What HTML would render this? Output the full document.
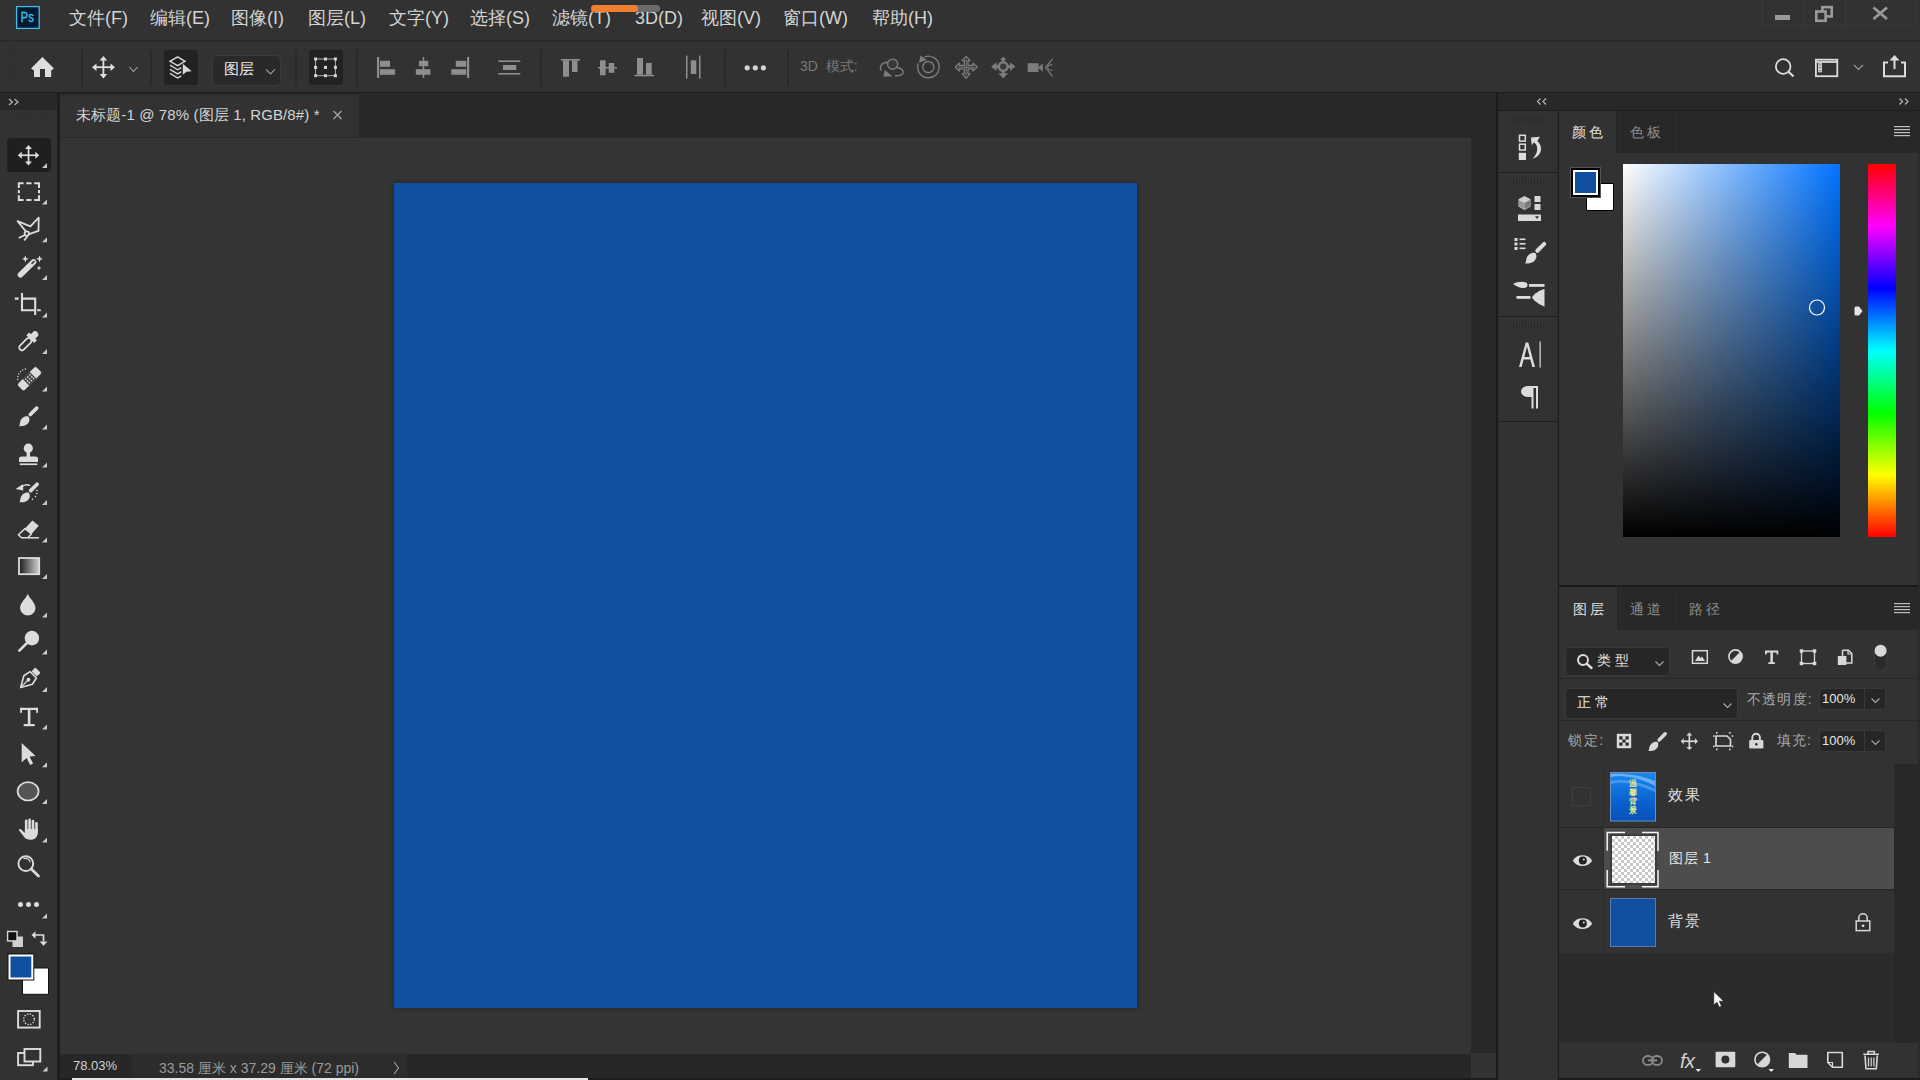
<!DOCTYPE html>
<html><head><meta charset="utf-8">
<style>
*{margin:0;padding:0;box-sizing:border-box}
html,body{width:1920px;height:1080px;overflow:hidden;background:#323232;font-family:"Liberation Sans",sans-serif;color:#d6d6d6}
.a{position:absolute}
svg{position:absolute;overflow:visible}
.menu{position:absolute;top:6px;font-size:18px;color:#d4d4d4;white-space:nowrap;line-height:24px}
</style></head><body>

<!-- MENU BAR -->
<div class="a" style="left:0;top:0;width:1920px;height:40px;background:#323232"></div>
<div class="a" style="left:0;top:40px;width:1920px;height:2px;background:#2a2a2a"></div>


<!-- PS logo -->
<svg width="40" height="40" style="left:0;top:0"><rect x="16.6" y="6.6" width="22.6" height="21.8" fill="#001b30" stroke="#45bbe8" stroke-width="1.3"/><text x="20.6" y="22.4" font-family="Liberation Sans" font-size="15.5" fill="#45bbe8" stroke="#45bbe8" stroke-width="0.35" textLength="13.4" lengthAdjust="spacingAndGlyphs">Ps</text></svg>
<div class="menu" style="left:69px">文件(F)</div>
<div class="menu" style="left:150px">编辑(E)</div>
<div class="menu" style="left:231px">图像(I)</div>
<div class="menu" style="left:308px">图层(L)</div>
<div class="menu" style="left:389px">文字(Y)</div>
<div class="menu" style="left:470px">选择(S)</div>
<div class="menu" style="left:552px">滤镜(T)</div>
<div class="menu" style="left:635px">3D(D)</div>
<div class="menu" style="left:701px">视图(V)</div>
<div class="menu" style="left:783px">窗口(W)</div>
<div class="menu" style="left:872px">帮助(H)</div>
<!-- progress -->
<div class="a" style="left:591px;top:5px;width:69px;height:7px;border-radius:4px;background:#6b6b6b"></div>
<div class="a" style="left:591px;top:5px;width:47px;height:7px;border-radius:4px;background:#f07f2f"></div>

<!-- OPTIONS BAR -->
<div class="a" style="left:0;top:42px;width:1920px;height:50px;background:#323232"></div>
<div class="a" style="left:0;top:92px;width:1920px;height:1px;background:#1e1e1e"></div>


<!-- grips -->
<div class="a" style="left:8px;top:46px;width:8px;height:40px;background:repeating-linear-gradient(#2f2f2f 0 1px,transparent 1px 3px)"></div>
<!-- separators -->
<div class="a" style="left:81px;top:50px;width:2px;height:36px;background:#292929"></div>
<div class="a" style="left:150px;top:50px;width:2px;height:36px;background:#292929"></div>
<div class="a" style="left:295px;top:50px;width:2px;height:36px;background:#292929"></div>
<div class="a" style="left:356px;top:50px;width:2px;height:36px;background:#292929"></div>
<div class="a" style="left:540px;top:50px;width:2px;height:36px;background:#292929"></div>
<div class="a" style="left:724px;top:50px;width:2px;height:36px;background:#292929"></div>
<div class="a" style="left:787px;top:50px;width:2px;height:36px;background:#292929"></div>
<svg width="1920" height="100" style="left:0;top:0">
 <path d="M42.4 57 L54 68.4 L51.2 70.5 L51.2 77 L45 77 L45 69 L40 69 L40 77 L34 77 L34 70.5 L31 68.4 Z" fill="#dedede"/>
 <g fill="#dedede">
  <path d="M103.4 56 L107.2 60.5 L99.6 60.5 Z M103.4 78.4 L107.2 74 L99.6 74 Z M92 67.2 L96.5 63.4 L96.5 71 Z M115 67.2 L110.5 63.4 L110.5 71 Z"/>
  <rect x="102.5" y="59" width="1.8" height="16"/><rect x="95" y="66.3" width="17" height="1.8"/>
 </g>
 <path d="M129.5 67 L133.5 71.5 L137.5 67" stroke="#a8a8a8" stroke-width="1.1" fill="none"/>
</svg>
<div class="a" style="left:164px;top:50px;width:34px;height:35px;background:#222;border-radius:3px"></div>
<svg width="40" height="40" style="left:160px;top:46px">
 <g transform="translate(-160 -46)" fill="none" stroke="#dadada" stroke-width="1.4" stroke-linejoin="miter">
  <path d="M177.66 56.8 L185 61.3 L177.66 65.6 L170 61.3 Z"/>
  <path d="M170 65.2 L177.66 69.8 L181.3 67.6"/>
  <path d="M170 69.3 L177.66 73.9 L181.3 71.7"/>
  <path d="M170 73.4 L177.66 78 L181.3 75.8"/>
 </g>
 <path d="M182.8 63.8 L191.7 71.2 L186.5 71.8 L182.8 74.8 Z" transform="translate(-160 -46)" fill="#dadada"/>
</svg>
<div class="a" style="left:212px;top:55px;width:69px;height:31px;background:#292929;border:1px solid #3c3c3c;border-radius:5px"></div>
<div class="a" style="left:224px;top:58px;font-size:15px;line-height:22px;color:#ececec">图层</div>
<svg width="20" height="20" style="left:260px;top:60px"><path d="M6 9.4 L10.5 14 L15 9.4" stroke="#a0a0a0" stroke-width="1.1" fill="none"/></svg>
<div class="a" style="left:309px;top:50px;width:34px;height:35px;background:#222;border-radius:3px"></div>
<svg width="40" height="40" style="left:300px;top:46px">
 <g stroke="#bdbdbd" stroke-width="0.9" fill="none"><rect x="15.6" y="13" width="19.8" height="16.7"/></g>
 <g fill="#d8d8d8">
  <rect x="14.1" y="11.5" width="3" height="3"/><rect x="24" y="11.5" width="3" height="3"/><rect x="33.9" y="11.5" width="3" height="3"/>
  <rect x="14.1" y="19.9" width="3" height="3"/><rect x="24" y="19.9" width="3" height="3"/><rect x="33.9" y="19.9" width="3" height="3"/>
  <rect x="14.1" y="28.2" width="3" height="3"/><rect x="24" y="28.2" width="3" height="3"/><rect x="33.9" y="28.2" width="3" height="3"/>
 </g>
</svg>
<svg width="1920" height="100" style="left:0;top:0">
 <g fill="#8e8e8e">
  <rect x="377" y="57" width="2.2" height="21"/><rect x="380" y="60.8" width="10" height="6"/><rect x="380" y="69.2" width="15" height="5.6"/>
  <rect x="422.7" y="57" width="1.5" height="21"/><rect x="419" y="60.8" width="9.3" height="5.4"/><rect x="415.8" y="69.2" width="14.6" height="5.6"/>
  <rect x="467" y="57" width="2.2" height="21"/><rect x="455.8" y="60.8" width="10.5" height="6"/><rect x="451.3" y="69.2" width="15" height="5.6"/>
  <rect x="498.3" y="60.4" width="22" height="1.6"/><rect x="503" y="65" width="13.3" height="5"/><rect x="498.3" y="73" width="22" height="1.6"/>
  <rect x="561" y="59" width="19" height="1.6"/><rect x="563" y="60.5" width="6" height="16.2"/><rect x="572" y="60.5" width="5.5" height="11.5"/>
  <rect x="598" y="67" width="19" height="1.5"/><rect x="600" y="60.3" width="5.6" height="15"/><rect x="608.7" y="63" width="5.5" height="9.8"/>
  <rect x="634.5" y="74.7" width="19.5" height="1.6"/><rect x="637" y="58" width="6" height="16.7"/><rect x="646" y="63" width="5.7" height="11.7"/>
  <rect x="686" y="55.6" width="1.5" height="23"/><rect x="690.8" y="60.3" width="5.5" height="13.7"/><rect x="699" y="55.6" width="1.5" height="23"/>
 </g>
 <g fill="#d4d4d4"><circle cx="747.2" cy="67.8" r="2.6"/><circle cx="755.3" cy="67.8" r="2.6"/><circle cx="763.4" cy="67.8" r="2.6"/></g>
</svg>
<div class="a" style="left:800px;top:57px;font-size:14px;line-height:18px;color:#7a7a7a;white-space:nowrap">3D&nbsp; 模式:</div>
<svg width="1920" height="100" style="left:0;top:0">
 <g fill="none" stroke="#7c7c7c" stroke-width="1.4">
  <circle cx="892.6" cy="64.2" r="5.1" fill="#3a3a3a"/>
  <path d="M887.6 62.3 C881.5 62.8 878.8 66.5 881.5 70.5"/>
  <path d="M895 75.8 C900 76 903.5 74.5 903.2 72 C903 69.8 900.5 68.2 897.3 67.8"/>
  <path d="M924.5 56.9 A10.8 10.8 0 1 1 918.2 63.5"/>
  <circle cx="928.3" cy="67.1" r="5.6"/>
 </g>
 <g fill="#7c7c7c">
  <path d="M883.3 76.6 L892.5 76.6 L884.8 70 Z"/>
  <path d="M918.8 62.8 L920.6 55.6 L926.8 60 Z"/>
 </g>
 <path d="M966.2 56.4 L970.2 60.6 L968 60.6 L968 65.3 L972.9 65.3 L972.9 63.1 L977.3 67.1 L972.9 71.1 L972.9 68.9 L968 68.9 L968 73.6 L970.2 73.6 L966.2 78.4 L962.2 73.6 L964.4 73.6 L964.4 68.9 L959.5 68.9 L959.5 71.1 L955.2 67.1 L959.5 63.1 L959.5 65.3 L964.4 65.3 L964.4 60.6 L962.2 60.6 Z" fill="none" stroke="#7c7c7c" stroke-width="1.3" stroke-linejoin="round"/>
 <path d="M966.2 59 L966.2 76 M957.8 67.1 L974.7 67.1" stroke="#7c7c7c" stroke-width="1"/>
 <g fill="#7c7c7c">
  <circle cx="1003.2" cy="66.6" r="5.6"/>
  <path d="M1003.2 56.4 L1006.3 60 L1000.1 60 Z M1003.2 78.6 L1008 73.3 L998.4 73.3 Z M991.2 66.6 L996.6 62.3 L996.6 70.9 Z M1015.4 66.6 L1010 62.3 L1010 70.9 Z"/>
  <rect x="1001.8" y="59" width="2.8" height="15"/><rect x="995" y="65.2" width="16.5" height="2.8"/>
 </g>
 <circle cx="1003.2" cy="66.6" r="3.1" fill="#3a3a3a"/>
 <g fill="#7c7c7c">
  <rect x="1027.7" y="63.2" width="10.8" height="8.8"/><path d="M1038 67.6 L1042.8 63.4 L1042.8 71.8 Z"/>
 </g>
 <path d="M1052.6 58.8 L1045.4 67.6 L1052.6 76.4" fill="none" stroke="#7c7c7c" stroke-width="1.2"/>
 <path d="M1047.4 67.6 C1048.5 65 1050.5 64.5 1052.6 65.3 M1047.4 67.6 C1048.5 70.2 1050.5 70.7 1052.6 69.9" fill="none" stroke="#7c7c7c" stroke-width="1.1"/>
</svg>
<!-- right options -->
<svg width="1920" height="100" style="left:0;top:0">
 <g fill="none" stroke="#dcdcdc" stroke-width="1.8">
  <circle cx="1783.2" cy="66.5" r="7.3"/><path d="M1788.5 71.8 L1793.5 76.5" stroke-width="2.2"/>
  <rect x="1815.9" y="59.7" width="21.4" height="16.5"/><path d="M1816.5 62 L1837 62"/>
 </g>
 <g fill="none" stroke="#dcdcdc" stroke-width="1"><rect x="1818.7" y="63.7" width="2.6" height="2.3"/><rect x="1818.7" y="66.6" width="2.6" height="2.3"/><rect x="1818.7" y="69.5" width="2.6" height="2.3"/></g><rect x="1818.2" y="63.2" width="3.6" height="9.1" fill="#dcdcdc" opacity="0.35"/>
 <path d="M1854 65 L1858.5 69.5 L1863 65" stroke="#9c9c9c" stroke-width="1.1" fill="none"/>
 <g fill="none" stroke="#dcdcdc" stroke-width="2"><path d="M1888 62.5 L1884 62.5 L1884 76.2 L1905 76.2 L1905 62.5 L1901 62.5"/><path d="M1894.5 59 L1894.5 69"/></g>
 <path d="M1894.5 55 L1899.5 60.5 L1889.5 60.5 Z" fill="#dcdcdc"/>
</svg>
<!-- window controls -->
<svg width="1920" height="40" style="left:0;top:0">
 <g fill="none" stroke="#3a3a3a" stroke-width="1"><path d="M1762.5 0 L1762.5 25.5 L1915.5 25.5 L1915.5 0 M1804.5 0 L1804.5 25 M1845.5 0 L1845.5 25"/></g>
 <rect x="1775" y="15" width="15" height="5" fill="#9a9a9a"/>
 <g fill="none" stroke="#9a9a9a" stroke-width="2.6"><rect x="1822.4" y="7.1" width="9.3" height="9.3"/><rect x="1816.3" y="11.5" width="9.3" height="9.3" fill="#323232"/></g>
 <path d="M1873.5 7.5 L1887 19 M1887 7.5 L1873.5 19" stroke="#9a9a9a" stroke-width="2.8"/>
</svg>

<!-- left tools header -->
<div class="a" style="left:0;top:93px;width:57px;height:17px;background:#282828"></div>
<div class="a" style="left:0;top:110px;width:57px;height:970px;background:#323232"></div>
<div class="a" style="left:57px;top:93px;width:3px;height:987px;background:#1e1e1e"></div>


<!-- TOOLBAR -->
<div class="a" style="left:7px;top:138px;width:44px;height:34px;background:#1f1f1f;border-radius:4px"></div>
<div class="a" style="left:10px;top:112px;width:40px;height:12px;background:repeating-linear-gradient(90deg,#2f2f2f 0 1px,transparent 1px 3px)"></div>
<svg width="60" height="1080" style="left:0;top:0">
 <path d="M9 99 L12.5 102 L9 105 M14.5 99 L18 102 L14.5 105" fill="none" stroke="#b8b8b8" stroke-width="1.2"/>
 <g fill="#cacaca" transform="translate(-0.5 0.4)"><path d="M47.5 162.5 L47.5 167.5 L42.5 167.5 Z"/><path d="M47.5 199.0 L47.5 204.0 L42.5 204.0 Z"/><path d="M47.5 236.9 L47.5 241.9 L42.5 241.9 Z"/><path d="M47.5 274.5 L47.5 279.5 L42.5 279.5 Z"/><path d="M47.5 312.0 L47.5 317.0 L42.5 317.0 Z"/><path d="M47.5 348.5 L47.5 353.5 L42.5 353.5 Z"/><path d="M47.5 386.2 L47.5 391.2 L42.5 391.2 Z"/><path d="M47.5 424.0 L47.5 429.0 L42.5 429.0 Z"/><path d="M47.5 462.0 L47.5 467.0 L42.5 467.0 Z"/><path d="M47.5 499.5 L47.5 504.5 L42.5 504.5 Z"/><path d="M47.5 537.0 L47.5 542.0 L42.5 542.0 Z"/><path d="M47.5 573.5 L47.5 578.5 L42.5 578.5 Z"/><path d="M47.5 612.0 L47.5 617.0 L42.5 617.0 Z"/><path d="M47.5 649.0 L47.5 654.0 L42.5 654.0 Z"/><path d="M47.5 686.5 L47.5 691.5 L42.5 691.5 Z"/><path d="M47.5 724.2 L47.5 729.2 L42.5 729.2 Z"/><path d="M47.5 761.9 L47.5 766.9 L42.5 766.9 Z"/><path d="M47.5 798.5 L47.5 803.5 L42.5 803.5 Z"/><path d="M47.5 837.1 L47.5 842.1 L42.5 842.1 Z"/><path d="M47.5 913 L47.5 918 L42.5 918 Z"/><path d="M48 1066 L48 1071 L43 1071 Z"/></g>
 <g fill="#dcdcdc">
  <path d="M28.5 145 L32 149 L25 149 Z M28.5 165.6 L32 161.6 L25 161.6 Z M17.8 155.3 L21.8 151.8 L21.8 158.8 Z M39.3 155.3 L35.3 151.8 L35.3 158.8 Z"/>
  <rect x="27.7" y="148" width="1.7" height="14.5"/><rect x="21" y="154.4" width="15" height="1.7"/>
 </g>
 <g fill="none" stroke="#dcdcdc" stroke-width="2">
  <path d="M18.8 188 L18.8 183.2 L23.6 183.2 M26.3 183.2 L31.5 183.2 M34.2 183.2 L39 183.2 L39 188 M39 190 L39 193.2 M39 195.2 L39 199.9 L34.2 199.9 M31.5 199.9 L26.3 199.9 M23.6 199.9 L18.8 199.9 L18.8 195.2 M18.8 193.2 L18.8 190"/>
  <path d="M17.6 221.2 L30.4 226.3 L38.7 217.6 L38.5 230.9 L28.3 234.4 Z" stroke-width="1.8" stroke-linejoin="round"/>
 </g>
 <g fill="none" stroke="#dcdcdc" stroke-width="1.8"><circle cx="26.8" cy="233.6" r="2.2" fill="#323232"/><path d="M25 235 L18.7 238 M27.5 236 L24.2 240.5"/></g>
 <!-- wand -->
 <path d="M20.5 274.8 L33.5 262" stroke="#dcdcdc" stroke-width="5.6" stroke-linecap="round"/>
 <path d="M32 263.5 L34 261.5" stroke="#323232" stroke-width="1.6" stroke-linecap="round"/>
 <g fill="#dcdcdc"><path d="M25.3 255.4 L26.3 258 L28.8 258.9 L26.3 259.8 L25.3 262.4 L24.3 259.8 L21.8 258.9 L24.3 258 Z"/><path d="M39.5 255.4 L40.5 258 L43 258.9 L40.5 259.8 L39.5 262.4 L38.5 259.8 L36 258.9 L38.5 258 Z"/><path d="M39 265.5 L39.7 267.3 L41.5 268 L39.7 268.7 L39 270.5 L38.3 268.7 L36.5 268 L38.3 267.3 Z"/></g>
 <!-- crop -->
 <g fill="none" stroke="#dcdcdc" stroke-width="2.1"><path d="M22 293 L22 310.3 L35.2 310.3 M14.8 298.6 L18.6 298.6 M22 298.6 L35.2 298.6 L35.2 315 M37.2 310.3 L40.8 310.3"/></g>
 <!-- eyedropper -->
 <g transform="translate(28.5 341) rotate(45)">
  <rect x="-3.2" y="-12.5" width="6.4" height="8" rx="3.2" fill="#dcdcdc"/>
  <rect x="-5.5" y="-6.5" width="11" height="4" fill="#dcdcdc"/>
  <rect x="-2.8" y="-3" width="5.6" height="15" rx="2.8" fill="none" stroke="#dcdcdc" stroke-width="1.8"/>
 </g>
 <!-- healing -->
 <g transform="translate(29.5 378.7) rotate(-45)">
  <rect x="-13" y="-4.6" width="26" height="9.2" rx="2" fill="#dcdcdc"/>
  <rect x="-5" y="-4.6" width="10" height="9.2" fill="#3a3a3a"/>
  <g fill="#dcdcdc"><circle cx="-3" cy="-2.3" r="0.9"/><circle cx="0" cy="-2.3" r="0.9"/><circle cx="3" cy="-2.3" r="0.9"/><circle cx="-3" cy="0.3" r="0.9"/><circle cx="0" cy="0.3" r="0.9"/><circle cx="3" cy="0.3" r="0.9"/><circle cx="-3" cy="2.7" r="0.9"/><circle cx="0" cy="2.7" r="0.9"/><circle cx="3" cy="2.7" r="0.9"/></g>
 </g>
 <path d="M18 380 A9 9 0 0 1 27 369" fill="none" stroke="#cfcfcf" stroke-width="1.4" stroke-dasharray="1.2 1.6"/>
 <!-- brush -->
 <g transform="translate(38.6 406.2) scale(1.0)" fill="#dcdcdc" color="#dcdcdc"><path d="M-1.9 1.9 L-8.3 8.3" stroke-width="3.7" stroke-linecap="round" stroke="currentColor"/><path d="M-10 10.6 C-8.4 12.8 -9 16.8 -12.3 18.6 C-14.6 19.9 -17.3 20.1 -19.6 20 C-18.7 19 -18.9 17.3 -18.4 15.6 C-17.4 11.8 -13.3 9 -10 10.6 Z"/></g>
 <!-- stamp -->
 <g fill="#dcdcdc"><circle cx="28.3" cy="448.2" r="4.6"/><rect x="26.6" y="451" width="3.4" height="6"/><path d="M19 462 L19 459 C19 457 20 456.4 22 456.4 L35 456.4 C37 456.4 38 457 38 459 L38 462 Z"/><rect x="19.7" y="463.4" width="17.6" height="1.7"/></g>
 <!-- history brush -->
 <g fill="#dcdcdc">
  </g><g transform="translate(39 482.3) scale(1.0)" fill="#dcdcdc" color="#dcdcdc"><path d="M-1.9 1.9 L-8.3 8.3" stroke-width="3.7" stroke-linecap="round" stroke="currentColor"/><path d="M-10 10.6 C-8.4 12.8 -9 16.8 -12.3 18.6 C-14.6 19.9 -17.3 20.1 -19.6 20 C-18.7 19 -18.9 17.3 -18.4 15.6 C-17.4 11.8 -13.3 9 -10 10.6 Z"/></g><g fill="#dcdcdc"><path d="M15.6 489 L22.8 484.2 L23.3 490.4 Z"/>
  <circle cx="37" cy="490.5" r="0.8"/><circle cx="36.7" cy="493.5" r="0.8"/><circle cx="35.5" cy="496.5" r="0.8"/><circle cx="32.5" cy="499.3" r="0.8"/>
 </g>
 <path d="M21.5 487.5 C24 484.6 27.5 484.3 30.3 485.8" fill="none" stroke="#dcdcdc" stroke-width="1.3"/>
 <!-- eraser -->
 <path d="M32.4 520.5 L38.8 525.8 L31.5 534 L25 528.6 Z" fill="#dcdcdc"/>
 <path d="M25 528.6 L31.5 534 L27.8 537.8 L21.5 537.8 L18.4 534.8 Z" fill="none" stroke="#dcdcdc" stroke-width="1.5" stroke-linejoin="round"/>
 <path d="M27.8 537.8 L39 537.8" stroke="#dcdcdc" stroke-width="1.5"/>
 <!-- gradient -->
 <defs><linearGradient id="gr" x1="0" x2="1"><stop offset="0" stop-color="#1c1c1c"/><stop offset="1" stop-color="#d0d0d0"/></linearGradient></defs>
 <rect x="19" y="558" width="20.2" height="16.2" fill="url(#gr)" stroke="#dcdcdc" stroke-width="1.8"/>
 <!-- blur -->
 <path d="M27.8 593.8 C29 598 35.5 602.5 35.5 608 A7.7 7.5 0 0 1 20.1 608 C20.1 602.5 26.6 598 27.8 593.8 Z" fill="#dcdcdc"/>
 <!-- dodge -->
 <circle cx="31.9" cy="638.1" r="7.3" fill="#dcdcdc"/>
 <path d="M26.5 643.5 L19.3 650.7" stroke="#dcdcdc" stroke-width="2.6" stroke-linecap="round"/>
 <!-- pen -->
 <g transform="translate(28.8 679.3) rotate(45)">
  <rect x="-3.7" y="-13" width="7.4" height="5.4" rx="1" fill="#dcdcdc"/>
  <path d="M-4.5 -6.3 L4.5 -6.3 L6 1 L0 11.5 L-6 1 Z" fill="none" stroke="#dcdcdc" stroke-width="1.6" stroke-linejoin="round"/>
  <circle cx="0" cy="0.5" r="1.9" fill="#dcdcdc"/><path d="M0 1 L0 11" stroke="#dcdcdc" stroke-width="1.2"/>
 </g>
 <!-- type -->
 <g fill="#dcdcdc"><rect x="20.2" y="707.8" width="17.8" height="2.2"/><rect x="20.2" y="707.8" width="1.8" height="5"/><rect x="36.2" y="707.8" width="1.8" height="5"/><rect x="27.8" y="708" width="2.6" height="17"/><rect x="23.7" y="724" width="11" height="2.2"/></g>
 <!-- path select -->
 <path d="M21.7 743 L21.7 762.3 L26.6 757.9 L30.2 765 L33.1 763.6 L29.6 756.5 L35.6 756 Z" fill="#dcdcdc"/>
 <!-- ellipse -->
 <ellipse cx="28.1" cy="791.3" rx="10.5" ry="9.2" fill="#555" stroke="#dcdcdc" stroke-width="1.7"/>
 <!-- hand -->
 <g fill="#dcdcdc">
  <rect x="24.9" y="819.5" width="2.6" height="14" rx="1.3"/><rect x="28.3" y="818.6" width="2.6" height="14" rx="1.3"/><rect x="31.7" y="819.8" width="2.6" height="14" rx="1.3"/><rect x="35.2" y="822" width="2.6" height="12" rx="1.3"/>
  <path d="M24.9 829 L24.9 833 C22.5 830.5 20.5 828.5 19.5 829 C18.6 829.4 18.9 830.4 19.9 831.6 L24.2 837 C25.5 838.8 27.6 839.8 30.4 839.8 C35 839.8 37.8 837 37.8 832 L37.8 829 Z"/>
 </g>
 <!-- zoom -->
 <circle cx="25.8" cy="863.6" r="7.4" fill="none" stroke="#dcdcdc" stroke-width="1.9"/>
 <path d="M31.2 869 L38.5 876" stroke="#dcdcdc" stroke-width="2.8" stroke-linecap="round"/>
 <path d="M23.5 858.8 A5 5 0 0 1 30.3 862.5" fill="none" stroke="#dcdcdc" stroke-width="1.1"/>
 <!-- dots -->
 <g fill="#dcdcdc"><circle cx="20.5" cy="904.6" r="2.5"/><circle cx="28.5" cy="904.6" r="2.5"/><circle cx="36.5" cy="904.6" r="2.5"/></g>
 <!-- default colors -->
 <rect x="12.5" y="936.5" width="10.5" height="10.5" fill="#cfcfcf"/>
 <rect x="7.6" y="931.5" width="9.4" height="9.4" fill="#111" stroke="#d8d8d8" stroke-width="1.4"/>
 <!-- swap -->
 <path d="M34.5 935 L43.5 935 L43.5 941.5" fill="none" stroke="#dcdcdc" stroke-width="1.7"/>
 <path d="M31.5 935 L35.5 931.2 L35.5 938.8 Z M43.5 945.8 L39.6 941.6 L47.4 941.6 Z" fill="#dcdcdc"/>
 <!-- fg/bg -->
 <rect x="22.5" y="968" width="26" height="26.3" fill="#fff" stroke="#111" stroke-width="1"/>
 <rect x="7.5" y="953.5" width="26.8" height="27" fill="#111"/>
 <rect x="8.5" y="954.5" width="24.8" height="25" fill="#fff"/>
 <rect x="10.5" y="956.5" width="20.8" height="21" fill="#1150a0"/>
 <!-- quick mask -->
 <rect x="18.1" y="1011" width="21.6" height="16.6" fill="none" stroke="#dcdcdc" stroke-width="1.9"/>
 <circle cx="29" cy="1019.3" r="5.3" fill="none" stroke="#dcdcdc" stroke-width="1.4" stroke-dasharray="1.3 1.5"/>
 <!-- screen mode -->
 <rect x="18.1" y="1053" width="14.8" height="12.2" fill="none" stroke="#dcdcdc" stroke-width="1.9"/>
 <rect x="24.5" y="1049" width="15.8" height="12.5" fill="#323232" stroke="#dcdcdc" stroke-width="1.9"/>
</svg>

<!-- tab bar -->
<div class="a" style="left:60px;top:93px;width:1436px;height:45px;background:#282828"></div>
<div class="a" style="left:60px;top:95px;width:299px;height:42px;background:#323232"></div>

<!-- pasteboard -->
<div class="a" style="left:60px;top:138px;width:1411px;height:916px;background:#343434"></div>
<div class="a" style="left:60px;top:138px;width:1411px;height:1px;background:#393939"></div>
<!-- scrollbar -->
<div class="a" style="left:1471px;top:138px;width:25px;height:915px;background:#292929"></div>
<div class="a" style="left:1471px;top:1054px;width:25px;height:24px;background:#333"></div>
<!-- status bar -->
<div class="a" style="left:60px;top:1054px;width:1411px;height:26px;background:#272727"></div>
<div class="a" style="left:132px;top:1055px;width:275px;height:23px;background:#2c2c2c"></div>
<div class="a" style="left:57px;top:1078px;width:1863px;height:2px;background:#1c1c1c"></div>


<div class="a" style="left:76px;top:105px;font-size:15px;line-height:20px;letter-spacing:0.12px;color:#d4d4d4;white-space:nowrap">未标题-1 @ 78% (图层 1, RGB/8#) *</div>
<svg width="20" height="20" style="left:328px;top:105px"><path d="M5.5 6 L13.5 14 M13.5 6 L5.5 14" stroke="#9c9c9c" stroke-width="1.6"/></svg>
<!-- status text -->

<div class="a" style="left:73px;top:1058px;font-size:13px;line-height:16px;color:#d2d2d2">78.03%</div>
<div class="a" style="left:159px;top:1059px;font-size:14px;line-height:18px;color:#9a9a9a;white-space:nowrap">33.58 厘米 x 37.29 厘米 (72 ppi)</div>
<svg width="20" height="20" style="left:388px;top:1058px"><path d="M6 4 L10.5 10 L6 16" stroke="#a0a0a0" stroke-width="1.1" fill="none"/></svg>
<div class="a" style="left:72px;top:1078px;width:516px;height:2px;background:#e6e6e6"></div>

<!-- document -->
<div class="a" style="left:394px;top:183px;width:743px;height:825px;background:#1150a0;box-shadow:0 0 4px 1px rgba(0,0,0,0.22)"></div>

<!-- right strip -->
<div class="a" style="left:1496px;top:93px;width:2px;height:987px;background:#1b1b1b"></div>
<div class="a" style="left:1498px;top:93px;width:422px;height:17px;background:#282828"></div>
<div class="a" style="left:1498px;top:110px;width:422px;height:1px;background:#1e1e1e"></div>
<svg width="30" height="20" style="left:1530px;top:92px"><path d="M10.5 6.5 L7.5 9.5 L10.5 12.5 M16 6.5 L13 9.5 L16 12.5" fill="none" stroke="#b8b8b8" stroke-width="1.2"/></svg>
<svg width="30" height="20" style="left:1890px;top:92px"><path d="M9.5 6.5 L12.5 9.5 L9.5 12.5 M15 6.5 L18 9.5 L15 12.5" fill="none" stroke="#b8b8b8" stroke-width="1.2"/></svg>
<div class="a" style="left:1498px;top:111px;width:60px;height:969px;background:#323232;border-left:1px solid #2c2c2c;border-right:1px solid #2c2c2c"></div>
<div class="a" style="left:1498px;top:172px;width:60px;height:1px;background:#1e1e1e"></div>
<div class="a" style="left:1498px;top:316px;width:60px;height:1px;background:#1e1e1e"></div>
<div class="a" style="left:1498px;top:421px;width:60px;height:1px;background:#1e1e1e"></div>
<div class="a" style="left:1513px;top:116px;width:31px;height:7px;background:repeating-linear-gradient(90deg,#2a2a2a 0 1px,transparent 1px 3px)"></div>
<div class="a" style="left:1513px;top:178px;width:31px;height:6px;background:repeating-linear-gradient(90deg,#2a2a2a 0 1px,transparent 1px 3px)"></div>
<div class="a" style="left:1513px;top:322px;width:31px;height:7px;background:repeating-linear-gradient(90deg,#2a2a2a 0 1px,transparent 1px 3px)"></div>
<div class="a" style="left:1558px;top:111px;width:1px;height:969px;background:#1e1e1e"></div>
<svg width="60" height="330" style="left:1497px;top:100px">
 <g transform="translate(-1497 -100)">
 <!-- history -->
 <g fill="none" stroke="#dcdcdc" stroke-width="1.5"><rect x="1519.5" y="135.3" width="5.8" height="5.8"/><rect x="1519.5" y="144.2" width="5.8" height="5.8"/></g>
 <rect x="1518.8" y="152.8" width="7.2" height="7.2" fill="#dcdcdc"/>
 <path d="M1531 137.6 L1540 136.8 L1537.3 141 C1540.8 144 1541.8 148 1540.5 152 C1539.2 155.5 1536.3 157.6 1532.5 158.8 C1535.5 156 1537.3 152.5 1537.2 148.5 C1537.1 145.5 1535.8 143.6 1534 142.2 L1531.6 145.3 Z" fill="#dcdcdc"/>
 <!-- 3d -->
 <path d="M1524.5 196 L1530.5 199.3 L1530.5 206.5 L1524.5 210 L1518.5 206.5 L1518.5 199.3 Z" fill="#cfcfcf"/>
 <path d="M1524.5 203 L1530 200 L1530 206.2 L1524.5 209.3 Z" fill="#7a7a7a"/><path d="M1524.5 203 L1519 200 L1519 206.2 L1524.5 209.3 Z" fill="#9a9a9a"/>
 <g fill="#d8d8d8"><rect x="1534.5" y="196" width="6" height="6"/><rect x="1534.5" y="204" width="6" height="6"/><rect x="1518" y="214.5" width="23" height="6.5"/></g>
 <path d="M1535 216.3 L1539 216.3 L1537 219 Z" fill="#333"/>
 <!-- brush presets -->
 <g fill="#dcdcdc"><rect x="1514.5" y="238" width="3" height="3"/><rect x="1514.5" y="242.5" width="3" height="3"/><rect x="1514.5" y="247" width="3" height="3"/><rect x="1519.5" y="238.5" width="6" height="1.6"/><rect x="1519.5" y="243" width="6" height="1.6"/><rect x="1519.5" y="247.5" width="6" height="1.6"/>
 </g><g transform="translate(1546.3 241.8) scale(1.08)" fill="#dcdcdc" color="#dcdcdc"><path d="M-1.9 1.9 L-8.3 8.3" stroke-width="3.7" stroke-linecap="round" stroke="currentColor"/><path d="M-10 10.6 C-8.4 12.8 -9 16.8 -12.3 18.6 C-14.6 19.9 -17.3 20.1 -19.6 20 C-18.7 19 -18.9 17.3 -18.4 15.6 C-17.4 11.8 -13.3 9 -10 10.6 Z"/></g><g></g>
 <!-- brush settings -->
 <g fill="#dcdcdc">
  <path d="M1513 284 C1517 282 1522 281 1526 282.5 C1528 283.5 1528 286.5 1526 287.5 C1522 289 1517 287 1513 284 Z"/>
  <rect x="1529" y="284" width="15.5" height="2.8"/><rect x="1516.5" y="296" width="14" height="2.8"/>
  <path d="M1544.5 289 L1544.5 306.5 C1540 305 1534 301 1532 297.5 C1534 293.5 1540 290 1544.5 289 Z"/>
 </g>
 <!-- character -->
 <path d="M1519 367 L1525.7 342.5 L1528.3 342.5 L1535 367 L1532.3 367 L1530.4 359.5 L1523.6 359.5 L1521.7 367 Z M1524.3 357 L1529.7 357 L1527 346.5 Z" fill="#dcdcdc"/>
 <rect x="1539.5" y="341.5" width="1.2" height="26" fill="#dcdcdc"/>
 <!-- paragraph -->
 <path d="M1528 386 L1538 386 L1538 408.5 L1536 408.5 L1536 388 L1533.5 388 L1533.5 408.5 L1531.5 408.5 L1531.5 397 L1528 397 C1524 397 1521 394.5 1521 391.5 C1521 388.5 1524 386 1528 386 Z" fill="#dcdcdc"/>
 </g>
</svg>

<!-- COLOR PANEL -->
<div class="a" style="left:1559px;top:111px;width:359px;height:474px;background:#323232"></div>
<div class="a" style="left:1559px;top:111px;width:359px;height:42px;background:#282828"></div>
<div class="a" style="left:1559px;top:111px;width:57px;height:43px;background:#323232"></div>
<div class="a" style="left:1620px;top:111px;width:1px;height:42px;background:#2c2c2c"></div>
<div class="a" style="left:1675px;top:111px;width:1px;height:42px;background:#2c2c2c"></div>
<div class="a" style="left:1572px;top:124px;font-size:13.5px;line-height:18px;letter-spacing:2.5px;color:#e0e0e0">颜色</div>
<div class="a" style="left:1630px;top:124px;font-size:13.5px;line-height:18px;letter-spacing:2.5px;color:#8c8c8c">色板</div>
<svg width="20" height="16" style="left:1892px;top:124px"><g fill="#bdbdbd"><rect x="2" y="2" width="16" height="1.2"/><rect x="2" y="5" width="16" height="1.2"/><rect x="2" y="8" width="16" height="1.2"/><rect x="2" y="11" width="16" height="1.2"/></g></svg>
<div class="a" style="left:1918px;top:111px;width:2px;height:969px;background:#2a2a2a"></div>
<!-- swatches -->
<div class="a" style="left:1586px;top:183px;width:28px;height:28px;background:#fff;border:1px solid #000;border-radius:0 0 2px 0"></div>
<div class="a" style="left:1570px;top:167px;width:31px;height:31px;background:#000;border:1px solid #555"></div>
<div class="a" style="left:1573px;top:170px;width:25px;height:25px;background:#fff"></div>
<div class="a" style="left:1575px;top:172px;width:21px;height:21px;background:#1150a0"></div>
<!-- picker -->
<div class="a" style="left:1623px;top:164px;width:217px;height:373px;background:linear-gradient(to bottom,rgba(0,0,0,0),#000),linear-gradient(to right,#fff,#0073ff)"></div>
<svg width="20" height="20" style="left:1807px;top:297px"><circle cx="10" cy="10.5" r="7.5" fill="none" stroke="#fff" stroke-width="1.2"/></svg>
<div class="a" style="left:1868px;top:164px;width:28px;height:373px;background:linear-gradient(to bottom,#ff0000 0%,#ff00ff 16.67%,#0000ff 33.33%,#00ffff 50%,#00ff00 66.67%,#ffff00 83.33%,#ff0000 100%)"></div>
<svg width="16" height="16" style="left:1852px;top:303px"><path d="M2.5 5 C2.5 4 3.2 3.5 4.5 3.5 L7 3.5 L10.5 8 L7 12.5 L4.5 12.5 C3.2 12.5 2.5 12 2.5 11 Z" fill="#e4e4e4"/></svg>
<div class="a" style="left:1559px;top:585px;width:359px;height:2px;background:#1b1b1b"></div>

<!-- LAYERS PANEL -->
<div class="a" style="left:1559px;top:587px;width:359px;height:493px;background:#323232"></div>
<div class="a" style="left:1559px;top:587px;width:359px;height:43px;background:#282828"></div>
<div class="a" style="left:1559px;top:587px;width:58px;height:44px;background:#323232"></div>
<div class="a" style="left:1620px;top:587px;width:1px;height:43px;background:#2c2c2c"></div>
<div class="a" style="left:1675px;top:587px;width:1px;height:43px;background:#2c2c2c"></div>
<div class="a" style="left:1733px;top:587px;width:1px;height:43px;background:#2c2c2c"></div>
<div class="a" style="left:1573px;top:601px;font-size:13.5px;line-height:18px;letter-spacing:2.5px;color:#e0e0e0">图层</div>
<div class="a" style="left:1630px;top:601px;font-size:13.5px;line-height:18px;letter-spacing:2.5px;color:#8c8c8c">通道</div>
<div class="a" style="left:1689px;top:601px;font-size:13.5px;line-height:18px;letter-spacing:2.5px;color:#8c8c8c">路径</div>
<svg width="20" height="16" style="left:1892px;top:601px"><g fill="#bdbdbd"><rect x="2" y="2" width="16" height="1.2"/><rect x="2" y="5" width="16" height="1.2"/><rect x="2" y="8" width="16" height="1.2"/><rect x="2" y="11" width="16" height="1.2"/></g></svg>


<!-- filter row -->
<div class="a" style="left:1565px;top:647px;width:105px;height:29px;background:#262626;border:1px solid #3a3a3a;border-radius:4px"></div>
<svg width="20" height="20" style="left:1575px;top:652px"><circle cx="8" cy="8" r="5" fill="none" stroke="#dcdcdc" stroke-width="1.9"/><path d="M11.7 11.7 L16.5 16" stroke="#dcdcdc" stroke-width="2.4" stroke-linecap="round"/></svg>
<div class="a" style="left:1597px;top:650px;font-size:14px;line-height:20px;letter-spacing:3.5px;color:#e0e0e0">类型</div>
<svg width="16" height="16" style="left:1652px;top:655px"><path d="M3.5 6.5 L7.5 10.5 L11.5 6.5" stroke="#a8a8a8" stroke-width="1.1" fill="none"/></svg>
<svg width="220" height="40" style="left:1680px;top:640px">
 <g transform="translate(-1680 -640)">
 <rect x="1692.5" y="650.7" width="14.8" height="12.6" fill="none" stroke="#d8d8d8" stroke-width="1.5"/>
 <path d="M1695 661 L1698.5 655.5 L1700.5 658 L1702 656.5 L1705 661 Z" fill="#d8d8d8"/>
 <circle cx="1735.5" cy="656.5" r="6.6" fill="none" stroke="#d8d8d8" stroke-width="1.6"/>
 <path d="M1740.2 651.8 A6.6 6.6 0 0 1 1730.8 661.2 Z" fill="#d8d8d8"/>
 <path d="M1765 650.5 L1778.3 650.5 L1778.3 654.5 L1776.8 654.5 L1776.3 652.6 L1772.9 652.6 L1772.9 662.3 L1775 662.3 L1775 664 L1768.3 664 L1768.3 662.3 L1770.4 662.3 L1770.4 652.6 L1767 652.6 L1766.5 654.5 L1765 654.5 Z" fill="#d8d8d8"/>
 <rect x="1801.5" y="651" width="13" height="12.5" fill="none" stroke="#d8d8d8" stroke-width="1.3"/>
 <g fill="#d8d8d8"><rect x="1799.7" y="649.2" width="3.6" height="3.6" rx="0.8"/><rect x="1812.7" y="649.2" width="3.6" height="3.6" rx="0.8"/><rect x="1799.7" y="661.7" width="3.6" height="3.6" rx="0.8"/><rect x="1812.7" y="661.7" width="3.6" height="3.6" rx="0.8"/></g>
 <path d="M1842.5 650.2 L1848.5 650.2 L1851.8 653.5 L1851.8 663 L1846 663" fill="none" stroke="#d8d8d8" stroke-width="1.5"/>
 <path d="M1848 650.5 L1848 654 L1851.5 654" fill="none" stroke="#d8d8d8" stroke-width="1.2"/>
 <path d="M1842.5 650.2 L1842.5 656" fill="none" stroke="#d8d8d8" stroke-width="1.5"/>
 <rect x="1837.8" y="656" width="8.6" height="9" fill="#d8d8d8"/>
 <rect x="1874.5" y="644.8" width="12.2" height="25.5" rx="6.1" fill="#2a2a2a" stroke="#3c3c3c" stroke-width="1"/>
 <circle cx="1880.6" cy="650.8" r="6" fill="#d8d8d8"/>
 </g>
</svg>
<div class="a" style="left:1559px;top:678px;width:359px;height:1px;background:#272727"></div>
<!-- blend row -->
<div class="a" style="left:1565px;top:688px;width:173px;height:31px;background:#262626;border:1px solid #3a3a3a;border-radius:4px"></div>
<div class="a" style="left:1577px;top:692px;font-size:14px;line-height:20px;letter-spacing:3.5px;color:#e8e8e8">正常</div>
<svg width="16" height="16" style="left:1720px;top:697px"><path d="M3.5 6.5 L7.5 10.5 L11.5 6.5" stroke="#a8a8a8" stroke-width="1.1" fill="none"/></svg>
<div class="a" style="left:1747px;top:689px;font-size:14px;line-height:20px;letter-spacing:1.2px;color:#a8a8a8;white-space:nowrap">不透明度:</div>
<div class="a" style="left:1819px;top:688px;width:67px;height:22px;background:#262626;border:1px solid #383838;border-radius:3px"></div>
<div class="a" style="left:1864px;top:689px;width:1px;height:20px;background:#3a3a3a"></div>
<div class="a" style="left:1822px;top:690px;font-size:13px;line-height:18px;color:#e8e8e8">100%</div>
<svg width="16" height="16" style="left:1868px;top:692px"><path d="M3.5 6.5 L7.5 10.5 L11.5 6.5" stroke="#a8a8a8" stroke-width="1.1" fill="none"/></svg>
<div class="a" style="left:1559px;top:720px;width:359px;height:1px;background:#272727"></div>
<!-- lock row -->
<div class="a" style="left:1568px;top:730px;font-size:14px;line-height:20px;letter-spacing:1.6px;color:#a8a8a8;white-space:nowrap">锁定:</div>
<svg width="200" height="30" style="left:1610px;top:726px">
 <g transform="translate(-1610 -726)">
 <rect x="1616.8" y="733.8" width="14.4" height="14.4" fill="#d8d8d8"/>
 <g fill="#2b2b2b"><rect x="1619.3" y="736.3" width="3.2" height="3.2"/><rect x="1625.5" y="736.3" width="3.2" height="3.2"/><rect x="1622.4" y="739.4" width="3.2" height="3.2"/><rect x="1619.3" y="742.5" width="3.2" height="3.2"/><rect x="1625.5" y="742.5" width="3.2" height="3.2"/></g>
 <g transform="translate(1667 732) scale(0.95)" fill="#d8d8d8" color="#d8d8d8"><path d="M-1.9 1.9 L-8.3 8.3" stroke-width="3.7" stroke-linecap="round" stroke="currentColor"/><path d="M-10 10.6 C-8.4 12.8 -9 16.8 -12.3 18.6 C-14.6 19.9 -17.3 20.1 -19.6 20 C-18.7 19 -18.9 17.3 -18.4 15.6 C-17.4 11.8 -13.3 9 -10 10.6 Z"/></g>
 <g fill="#d8d8d8"><path d="M1689.3 732.4 L1692.3 735.5 L1686.3 735.5 Z M1689.3 750 L1692.3 747 L1686.3 747 Z M1680.7 741.2 L1683.8 738.2 L1683.8 744.2 Z M1698 741.2 L1694.9 738.2 L1694.9 744.2 Z"/><rect x="1688.5" y="735" width="1.7" height="12.5"/><rect x="1683.5" y="740.4" width="11.5" height="1.7"/></g>
 <path d="M1716 736 L1727 736 L1730.5 739.5 L1730.5 746 L1716 746 Z" fill="none" stroke="#d8d8d8" stroke-width="1.7"/>
 <g fill="#d8d8d8"><rect x="1713" y="735.3" width="1.6" height="1.6"/><rect x="1731.6" y="735.3" width="1.6" height="1.6"/><rect x="1713" y="745.6" width="1.6" height="1.6"/><rect x="1731.6" y="745.6" width="1.6" height="1.6"/><rect x="1716" y="732" width="1.6" height="1.6"/><rect x="1716" y="748.6" width="1.6" height="1.6"/><rect x="1729" y="732" width="1.6" height="1.6"/><rect x="1729" y="748.6" width="1.6" height="1.6"/></g>
 <path d="M1752.3 740 L1752.3 737.5 A3.8 3.8 0 0 1 1759.9 737.5 L1759.9 740" fill="none" stroke="#d8d8d8" stroke-width="1.9"/>
 <rect x="1749.2" y="740" width="14.2" height="8.6" rx="1" fill="#d8d8d8"/>
 <circle cx="1756.3" cy="744.2" r="1.3" fill="#323232"/>
 </g>
</svg>
<div class="a" style="left:1777px;top:730px;font-size:14px;line-height:20px;letter-spacing:1px;color:#a8a8a8;white-space:nowrap">填充:</div>
<div class="a" style="left:1819px;top:730px;width:67px;height:22px;background:#262626;border:1px solid #383838;border-radius:3px"></div>
<div class="a" style="left:1864px;top:731px;width:1px;height:20px;background:#3a3a3a"></div>
<div class="a" style="left:1822px;top:732px;font-size:13px;line-height:18px;color:#e8e8e8">100%</div>
<svg width="16" height="16" style="left:1868px;top:734px"><path d="M3.5 6.5 L7.5 10.5 L11.5 6.5" stroke="#a8a8a8" stroke-width="1.1" fill="none"/></svg>

<!-- layer list -->
<div class="a" style="left:1559px;top:764px;width:359px;height:279px;background:#2b2b2b"></div>
<div class="a" style="left:1894px;top:764px;width:24px;height:279px;background:#282828"></div>
<div class="a" style="left:1559px;top:764px;width:335px;height:63px;background:#323232"></div>
<div class="a" style="left:1559px;top:827px;width:335px;height:1px;background:#262626"></div>
<div class="a" style="left:1559px;top:828px;width:335px;height:61px;background:#323232"></div>
<div class="a" style="left:1604px;top:828px;width:290px;height:61px;background:#4d4d4d"></div>
<div class="a" style="left:1559px;top:889px;width:335px;height:1px;background:#262626"></div>
<div class="a" style="left:1559px;top:890px;width:335px;height:63px;background:#323232"></div>
<div class="a" style="left:1603px;top:764px;width:1px;height:189px;background:#2c2c2c"></div>
<!-- row1 -->
<div class="a" style="left:1572px;top:787px;width:19px;height:19px;border:1px solid #3e3e3e"></div>
<svg width="46" height="50" style="left:1610px;top:772px">
 <defs><linearGradient id="tb" x1="0" y1="0" x2="0" y2="1"><stop offset="0" stop-color="#1a88ee"/><stop offset="0.6" stop-color="#0a62d0"/><stop offset="1" stop-color="#0650b8"/></linearGradient></defs>
 <rect x="0.5" y="0.5" width="45" height="48.5" fill="url(#tb)" stroke="#6a8fc0" stroke-width="1"/>
 <path d="M1 5 C12 2 30 6 45 14 L45 9 C30 3 14 1 1 2 Z" fill="#9fd0ff" opacity="0.6"/>
 <path d="M1 12 C15 8 32 14 45 20 L45 17 C30 10 15 6 1 9 Z" fill="#7ec0ff" opacity="0.45"/>
 <g font-size="7.5" font-weight="bold" font-family="Liberation Sans" fill="#e6e68a" text-anchor="middle"><text x="22.5" y="14">温</text><text x="22.5" y="23">馨</text><text x="22.5" y="32">背</text><text x="22.5" y="41">景</text></g>
</svg>
<div class="a" style="left:1667.5px;top:784.5px;font-size:15px;line-height:20px;letter-spacing:2.5px;color:#e0e0e0">效果</div>
<!-- row2 -->
<svg width="30" height="20" style="left:1568px;top:851px"><path d="M4.8 9.7 C9 2.5 20 2.5 24.2 9.7 C20 16.9 9 16.9 4.8 9.7 Z" fill="#dcdcdc"/><circle cx="14.8" cy="9.6" r="4" fill="#222"/><circle cx="15.8" cy="8.4" r="1" fill="#dcdcdc"/></svg>
<div class="a" style="left:1611.5px;top:836px;width:43px;height:47px;background-color:#fff;background-image:linear-gradient(45deg,#c8c8c8 25%,transparent 25%,transparent 75%,#c8c8c8 75%),linear-gradient(45deg,#c8c8c8 25%,transparent 25%,transparent 75%,#c8c8c8 75%);background-size:6px 6px;background-position:0 0,3px 3px;outline:2px solid #3c3c3c"></div>
<svg width="60" height="64" style="left:1600px;top:826px">
 <g fill="none" stroke="#f4f4f4" stroke-width="1.5"><path d="M7.2 24.8 L7.2 6.6 L25 6.6 M42 6.6 L58 6.6 L58 25 M58 44 L58 60.7 L42 60.7 M25 60.7 L7.2 60.7 L7.2 44"/></g>
</svg>
<div class="a" style="left:1669px;top:848px;font-size:14px;line-height:20px;letter-spacing:0.7px;color:#e6e6e6;white-space:nowrap">图层 1</div>
<!-- row3 -->
<svg width="30" height="20" style="left:1568px;top:914px"><path d="M4.8 9.7 C9 2.5 20 2.5 24.2 9.7 C20 16.9 9 16.9 4.8 9.7 Z" fill="#dcdcdc"/><circle cx="14.8" cy="9.6" r="4" fill="#222"/><circle cx="15.8" cy="8.4" r="1" fill="#dcdcdc"/></svg>
<div class="a" style="left:1610px;top:898px;width:46px;height:49px;background:#1150a0;border:1px solid #5a7aa8"></div>
<div class="a" style="left:1667.5px;top:910.5px;font-size:15px;line-height:20px;letter-spacing:2.5px;color:#e0e0e0">背景</div>
<svg width="20" height="22" style="left:1853px;top:911px"><path d="M5.8 10 L5.8 7 A4.2 4.2 0 0 1 14.2 7 L14.2 10" fill="none" stroke="#d8d8d8" stroke-width="1.5"/><rect x="3.2" y="10" width="13.6" height="9.6" fill="none" stroke="#d8d8d8" stroke-width="1.5"/><circle cx="10" cy="14.8" r="1.4" fill="#d8d8d8"/></svg>
<!-- cursor -->
<svg width="20" height="24" style="left:1712px;top:990px"><path d="M1.8 1.5 L1.8 15 L5 12.2 L7.3 17.2 L9.5 16.2 L7.3 11.3 L11.8 11.3 Z" fill="#fff" stroke="#222" stroke-width="0.7"/></svg>
<!-- bottom bar -->
<div class="a" style="left:1559px;top:1043px;width:359px;height:35px;background:#323232"></div>
<div class="a" style="left:1559px;top:1078px;width:361px;height:2px;background:#1b1b1b"></div>
<svg width="280" height="30" style="left:1630px;top:1045px">
 <g transform="translate(-1630 -1045)">
 <g fill="none" stroke="#8a8a8a" stroke-width="1.8"><rect x="1643" y="1056" width="10" height="8.8" rx="4.4"/><rect x="1652" y="1056" width="10" height="8.8" rx="4.4"/></g>
 <path d="M1648 1060.4 L1657 1060.4" stroke="#8a8a8a" stroke-width="2"/>
 <text x="1680" y="1068" font-family="Liberation Sans" font-style="italic" font-size="20" fill="#d0d0d0" letter-spacing="-0.5">fx</text>
 <path d="M1695.5 1069 L1701 1069 L1698.2 1072 Z M1768.5 1069 L1774 1069 L1771.2 1072 Z" fill="#e8e8e8"/>
 <rect x="1715.6" y="1051.7" width="19.7" height="15.6" rx="1" fill="#d8d8d8"/>
 <circle cx="1725.4" cy="1059.5" r="4" fill="#303030"/>
 <circle cx="1762.2" cy="1059.5" r="7.3" fill="none" stroke="#d8d8d8" stroke-width="1.6"/>
 <path d="M1767.4 1054.3 A7.3 7.3 0 0 1 1757 1064.7 Z" fill="#d8d8d8"/>
 <path d="M1788.8 1053 L1795 1053 L1796.5 1054.8 L1807.5 1054.8 L1807.5 1068 L1788.8 1068 Z" fill="#d8d8d8"/>
 <path d="M1827.8 1052.5 L1842.3 1052.5 L1842.3 1067.3 L1832.5 1067.3 L1827.8 1062.5 Z" fill="none" stroke="#d8d8d8" stroke-width="1.6" stroke-linejoin="round"/>
 <path d="M1828 1062.5 L1832.5 1062.5 L1832.5 1067" fill="none" stroke="#d8d8d8" stroke-width="1.2"/>
 <path d="M1863.3 1054.3 L1879 1054.3 M1868 1054 L1868 1051.5 L1874.3 1051.5 L1874.3 1054" fill="none" stroke="#d8d8d8" stroke-width="1.6"/>
 <path d="M1865 1055.5 L1866 1068.7 L1876.3 1068.7 L1877.3 1055.5" fill="none" stroke="#d8d8d8" stroke-width="1.6"/>
 <path d="M1868.5 1057.5 L1868.5 1066.5 M1871.2 1057.5 L1871.2 1066.5 M1873.9 1057.5 L1873.9 1066.5" stroke="#d8d8d8" stroke-width="1.2"/>
 </g>
</svg>

</body></html>
